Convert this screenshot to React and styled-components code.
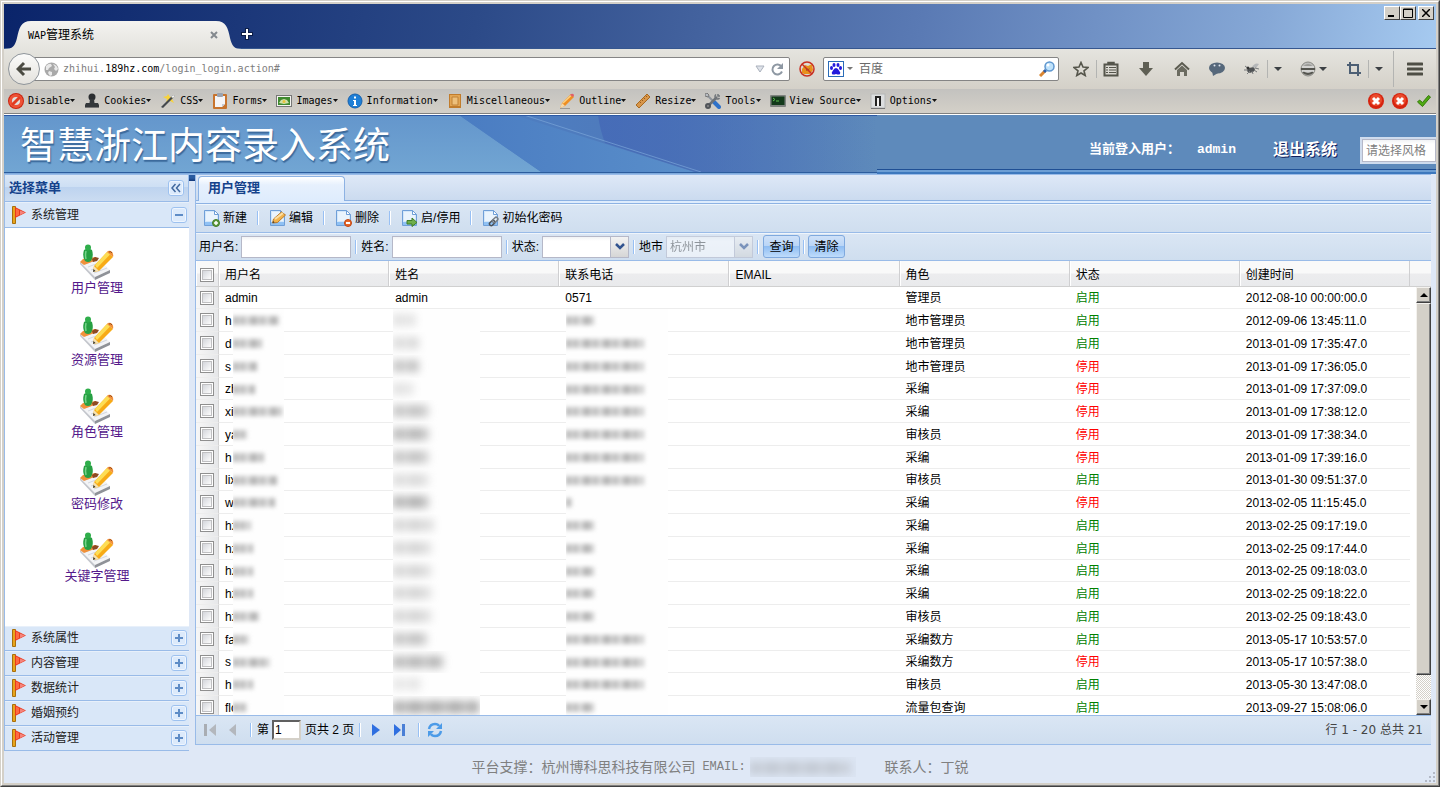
import React from 'react';
import styled, { createGlobalStyle, css } from 'styled-components';

const LINE = '#99bbe8';
const SANS = "'Liberation Sans', 'Noto Sans CJK SC', sans-serif";
const MONO = "'DejaVu Sans Mono', 'Noto Sans CJK SC', monospace";

const GlobalStyle = createGlobalStyle`
  *, *::before, *::after { box-sizing: border-box; }
  body { margin: 0; font: 12px/16px ${SANS}; color: #000; background: #d4d0c8; }
  button, input, select { font: inherit; color: inherit; }
  button { padding: 0; border: 0; background: none; cursor: pointer; }
  svg { display: block; flex: none; }
`;

/* ---------- window frame ---------- */

const Frame = styled.div`
  height: 100vh;
  min-height: 480px;
  border: 1px solid;
  border-color: #d4d0c8 #404040 #404040 #d4d0c8;
`;
const FrameInner = styled.div`
  height: 100%;
  display: flex;
  flex-direction: column;
  padding: 2px;
  background: #d4d0c8;
  border: 1px solid;
  border-color: #fff #808080 #808080 #fff;
`;
const TitleBar = styled.div`
  flex: none;
  display: flex;
  align-items: flex-end;
  height: 45px;
  border-bottom: 1px solid #36578f;
  background: linear-gradient(100deg, #0a246a 0%, #2c4a88 33%, #5a7ab4 64%, #86a8d6 88%, #a6caf0 100%);
`;
const BrowserTab = styled.div`
  position: relative;
  display: flex;
  align-items: center;
  justify-content: space-between;
  width: 238px;
  height: 28px;
  margin-bottom: -1px;
  padding: 0 24px;
`;
const TabShape = styled.svg`
  position: absolute;
  inset: 0;
`;
const TabText = styled.span`
  position: relative;
  font-size: 12px;
`;
const TabLatin = styled.span`
  font-family: ${MONO};
  font-size: 10px;
`;
const IconButton = styled.button`
  position: relative;
  display: flex;
  align-items: center;
  justify-content: center;
  gap: 3px;
  flex: none;
  width: ${(p) => p.$w || 16}px;
  height: ${(p) => p.$h || 24}px;
`;
const WindowButtons = styled.div`
  display: flex;
  align-self: flex-start;
  margin: 2px 2px 0 auto;
`;
const WindowButton = styled.button`
  display: flex;
  align-items: center;
  justify-content: center;
  width: 16px;
  height: 14px;
  background: #d4d0c8;
  border: 1px solid;
  border-color: #fff #404040 #404040 #fff;
  &:last-child { margin-left: 2px; }
`;

/* ---------- browser toolbars ---------- */

const NavBar = styled.div`
  flex: none;
  display: flex;
  align-items: center;
  height: 40px;
  padding-left: 4px;
  background: linear-gradient(#e5e4df, #d4d0c8);
`;
const BackButton = styled.button`
  position: relative;
  z-index: 1;
  display: flex;
  align-items: center;
  justify-content: center;
  width: 32px;
  height: 32px;
  margin-right: -8px;
  border: 1px solid #8f959b;
  border-radius: 50%;
  background: linear-gradient(#fbfbfa, #e4e2dd);
`;
const Field = styled.div`
  display: flex;
  align-items: center;
  height: 24px;
  background: #fff;
  border: 1px solid #858585;
  border-radius: 2px;
`;
const UrlField = styled(Field)`
  flex: 1;
  min-width: 0;
  padding: 0 4px 0 11px;
`;
const Url = styled.a`
  flex: 1;
  margin-left: 4px;
  color: #7d7d7d;
  font: 10px/16px ${MONO};
  text-decoration: none;
  b { color: #000; font-weight: 400; }
`;
const BlockButton = styled(IconButton)`
  margin: 0 8px 0 9px;
`;
const SearchField = styled(Field)`
  width: 236px;
  margin-right: 6px;
  padding: 0 2px 0 4px;
`;
const SearchInput = styled.input`
  flex: 1;
  min-width: 0;
  margin-left: 3px;
  padding: 0;
  border: 0;
  outline: 0;
  background: none;
  &::placeholder { color: #6a6a6a; opacity: 1; }
`;
const NavRule = styled.i`
  flex: none;
  width: 1px;
  height: ${(p) => (p.$tall ? 36 : 18)}px;
  margin-left: ${(p) => (p.$tall ? 4 : 0)}px;
  background: #b3b4b2;
`;
const DevBar = styled.div`
  flex: none;
  display: flex;
  align-items: center;
  gap: 8px;
  height: 25px;
  padding: 0 4px;
  border-bottom: 1px solid #808080;
  background: linear-gradient(#c3c2bf, #d4d0c8);
`;
const DevItem = styled.button`
  display: flex;
  align-items: center;
  flex: none;
  font: 10px/16px ${MONO};
  svg:first-child { margin-right: 4px; }
`;
const DevStatus = styled.div`
  display: flex;
  gap: 8px;
  margin-left: auto;
`;

/* ---------- page header ---------- */

const Page = styled.div`
  position: relative;
  flex: 1;
  min-height: 0;
  display: flex;
  flex-direction: column;
  border-top: 1px solid #fff;
  background: #dfe8f6;
`;
const Header = styled.header`
  position: relative;
  flex: none;
  display: flex;
  align-items: center;
  height: 59px;
  overflow: hidden;
  background: linear-gradient(#5e8abb 0 54px, #1f4f94 54px 55px, #6c9ed4 55px 57px, #3d78bd 57px);
`;
const Banner = styled.svg`
  position: absolute;
  left: 0;
  top: 0;
`;
const SiteTitle = styled.h1`
  position: relative;
  margin: 0 auto 0 16px;
  padding-bottom: 4px;
  color: #fff;
  font: 400 37px/52px 'Noto Sans CJK SC', sans-serif;
  text-shadow: 1px 2px 1px #3c6a9c;
  white-space: nowrap;
`;
const UserInfo = styled.div`
  position: relative;
  padding-top: 10px;
  color: #fff;
  font-size: 13px;
  font-weight: 700;
  white-space: nowrap;
`;
const UserName = styled.span`
  margin-left: 17px;
  font-family: 'Liberation Mono', monospace;
`;
const Logout = styled.a`
  position: relative;
  margin: 10px 23px 0 37px;
  color: #fff;
  font-size: 16px;
  font-weight: 700;
  text-decoration: none;
  text-shadow: 1px 1px 0 #10205c;
  white-space: nowrap;
`;
const StyleBox = styled.div`
  position: relative;
  flex: none;
  width: 76px;
  height: 27px;
  margin-top: 12px;
  padding: 2px 0 2px 2px;
  background: #cfdcee;
`;
const inputLook = css`
  border: 1px solid #b5b8c8;
  border-radius: 0;
  outline: 0;
  background: linear-gradient(#f1f3f5, #fff 4px);
`;
const StyleInput = styled.input`
  width: 74px;
  height: 23px;
  padding: 0 3px;
  ${inputLook}
  &::placeholder { color: gray; opacity: 1; }
`;

/* ---------- sidebar ---------- */

const Body = styled.div`
  flex: 1;
  min-height: 0;
  display: flex;
`;
const Sidebar = styled.nav`
  flex: none;
  display: flex;
  flex-direction: column;
  width: 185px;
  border-left: 1px solid ${LINE};
  border-top: 1px solid ${LINE};
`;
const SideHead = styled.div`
  flex: none;
  display: flex;
  align-items: center;
  justify-content: space-between;
  height: 27px;
  padding: 0 4px;
  border-right: 1px solid ${LINE};
  border-bottom: 1px solid ${LINE};
  background: linear-gradient(#dbe7f6, #cddff4 12px, #bdd3ef 12px, #cbdcf1);
  color: #15428b;
  font-size: 13px;
  font-weight: 700;
`;
const SideItem = styled.button`
  flex: none;
  display: flex;
  align-items: center;
  gap: 3px;
  height: ${(p) => (p.$open ? 26 : 25)}px;
  padding: 0 2px 0 6px;
  border-bottom: 1px solid ${LINE};
  background: #d9e7f8;
  box-shadow: inset 0 1px #e8f0fa;
  color: #222;
  text-align: left;
`;
const SideLabel = styled.span`
  flex: 1;
`;
const SideLinks = styled.div`
  flex: 1;
  min-height: 0;
  overflow: hidden;
  display: flex;
  flex-direction: column;
  align-items: center;
  gap: 20px;
  padding-top: 16px;
  background: #fff;
`;
const SideLink = styled.a`
  display: flex;
  flex-direction: column;
  align-items: center;
  color: #551a8b;
  font-size: 13px;
  text-decoration: none;
`;
const Splitter = styled.div`
  flex: none;
  width: 6px;
  border-top: 1px solid ${LINE};
  background: linear-gradient(#2a5ba0 0 3px, #14387a 6px, #dfe8f6 6px);
`;

/* ---------- main panel ---------- */

const Main = styled.main`
  flex: 1;
  min-width: 0;
  display: flex;
  flex-direction: column;
  margin: 0 5px 6px 0;
  border-left: 1px solid ${LINE};
  border-top: 1px solid ${LINE};
`;
const TabStrip = styled.div`
  flex: none;
  height: 26px;
  padding: 1px 2px 0;
  border-bottom: 1px solid #8db2e3;
  background: linear-gradient(#dee8f7, #cbdbef);
`;
const PanelTab = styled.button`
  width: 147px;
  height: 25px;
  padding: 0 9px 2px;
  border: 1px solid #8db2e3;
  border-bottom: 0;
  border-radius: 4px 4px 0 0;
  background: linear-gradient(#fff, #e6f0fd 8px, #deecfd);
  color: #15428b;
  font-size: 13px;
  font-weight: 700;
  text-align: left;
`;
const TabSpacer = styled.div`
  flex: none;
  height: 3px;
  border-bottom: 1px solid #8db2e3;
  background: #deecfd;
`;
const Bar = styled.div`
  flex: none;
  display: flex;
  align-items: center;
  height: ${(p) => p.$h}px;
  padding: 0 8px 0 ${(p) => p.$left}px;
  border-bottom: 1px solid ${LINE};
  background: linear-gradient(#dae6f4, #cfdeef);
  box-shadow: inset 0 1px #eff5fb;
  white-space: nowrap;
`;
const Rule = styled.i`
  flex: none;
  width: 2px;
  height: 14px;
  margin: 0 ${(p) => p.$gap}px;
  background: linear-gradient(90deg, #98c0f4 1px, #fff 1px);
`;
const ToolButton = styled.button`
  display: flex;
  align-items: center;
  gap: 3px;
  white-space: nowrap;
`;
const Label = styled.label`
  margin-right: 3px;
`;
const TextInput = styled.input`
  width: 110px;
  height: 22px;
  padding: 0 3px;
  ${inputLook}
`;
const Combo = styled.span`
  position: relative;
  display: flex;
  opacity: ${(p) => (p.$off ? 0.55 : 1)};
`;
const Select = styled.select`
  width: 87px;
  height: 22px;
  padding: 0 20px 0 3px;
  appearance: none;
  ${inputLook}
  &:disabled { color: #555; opacity: 1; }
`;
const Trigger = styled.span`
  position: absolute;
  right: 0;
  top: 0;
  display: flex;
  align-items: center;
  justify-content: center;
  width: 19px;
  height: 22px;
  border: 1px solid #b5b8c8;
  background: linear-gradient(#f3f3f3, #d6d6d6);
  pointer-events: none;
`;
const BlueButton = styled.button`
  width: 37px;
  height: 23px;
  border: 1px solid #7fa9de;
  border-radius: 3px;
  background: linear-gradient(#cfe1f8, #b9d5f7 10px, #8dbcf2 10px, #bfdcfb);
`;

/* ---------- grid ---------- */

const GridArea = styled.div`
  flex: 1;
  min-height: 0;
  display: flex;
  overflow: hidden;
  background: #fff;
`;
const TableWrap = styled.div`
  flex: 1;
  min-width: 0;
  overflow: hidden;
`;
const headFill = css`
  height: 26px;
  border-bottom: 1px solid #d0d0d0;
  background: linear-gradient(#f9f9f9 12px, #ececee 13px, #e9eaec);
`;
const Table = styled.table`
  width: 100%;
  table-layout: fixed;
  border-collapse: separate;
  border-spacing: 0;
`;
const CheckCol = styled.col`
  width: 23px;
`;
const Th = styled.th`
  ${headFill}
  padding: 2px 6px 0;
  border-right: 1px solid #cfcfd1;
  box-shadow: inset 1px 0 #fff;
  font-weight: 400;
  text-align: left;
`;
/* The row rhythm alternates 23px with an occasional 22px row. */
const Row = styled.tr`
  height: 23px;
  &:nth-child(4n + 1) { height: 22px; }
`;
const Td = styled.td`
  position: relative;
  padding: 1px 6px 0;
  border-bottom: 1px solid #ededed;
  color: ${(p) => p.$color || '#000'};
  line-height: 16px;
  white-space: nowrap;
`;
const CheckTd = styled(Td)`
  padding: 0 0 0 4px;
  border-right: 1px solid #d3d3d3;
  background: linear-gradient(90deg, #f7f7f7, #e6e7e9);
`;
const CheckTh = styled(Th)`
  padding: 3px 0 0 4px;
`;
const Check = styled.input`
  display: block;
  appearance: none;
  width: 14px;
  height: 14px;
  margin: 0;
  border: 1px solid #8f8f8f;
  background: linear-gradient(135deg, #c9ccd3, #fbfbfb 80%);
  box-shadow: inset 0 0 0 1px #fff, inset 0 0 0 2px #c0c0c2;
  &:checked { background: #6b8fc4; }
`;
/* Patch that hides private values behind a blurred smear. */
const Mask = styled.span`
  position: absolute;
  left: ${(p) => p.$left}px;
  top: 0;
  bottom: -1px;
  width: ${(p) => p.$w}px;
  overflow: hidden;
  background: #fefefe;
`;
const Smear = styled.span`
  position: absolute;
  left: 0;
  top: ${(p) => (p.$tall ? 5 : 7)}px;
  width: ${(p) => p.$w}px;
  height: ${(p) => (p.$tall ? 12 : 9)}px;
  background: repeating-linear-gradient(90deg, #6f6f6f 0 4px, #a9a9a9 4px 7px, #858585 7px 12px, #b5b5b5 12px 17px, #747474 17px 20px);
  opacity: ${(p) => p.$o};
  filter: blur(${(p) => (p.$tall ? 4 : 2)}px);
`;
const ScrollCol = styled.div`
  flex: none;
  display: flex;
  flex-direction: column;
  width: 21px;
`;
const HeadFill = styled.div`
  flex: none;
  ${headFill}
`;
const ScrollBar = styled.div`
  flex: 1;
  min-height: 0;
  display: flex;
  flex-direction: column;
  width: 15px;
  margin-left: auto;
  background: repeating-conic-gradient(#d4d0c8 0 25%, #fff 0 50%) 0 0 / 2px 2px;
`;
const raised = css`
  border: 1px solid;
  border-color: #f4f2ee #404040 #404040 #f4f2ee;
  background: #d4d0c8;
  box-shadow: inset -1px -1px #808080;
`;
const ScrollButton = styled.button`
  flex: none;
  display: flex;
  align-items: center;
  justify-content: center;
  height: 16px;
  ${raised}
`;
const ScrollTrack = styled.div`
  flex: 1;
  min-height: 0;
`;
const ScrollThumb = styled.div`
  height: 94%;
  ${raised}
`;
const Pager = styled.div`
  flex: none;
  display: flex;
  align-items: center;
  height: 30px;
  padding: 0 8px;
  border: solid ${LINE};
  border-width: 1px 0;
  background: linear-gradient(#dae6f4, #cfdeef);
  white-space: nowrap;
`;
const PageInput = styled.input`
  width: 29px;
  height: 20px;
  margin-right: 4px;
  padding: 0 1px;
  border: 2px solid;
  border-color: #606060 #d4d0c8 #d4d0c8 #606060;
  background: #fff;
`;
const PagerInfo = styled.span`
  margin-left: auto;
  color: #444;
  font-family: 'DejaVu Sans', 'Noto Sans CJK SC', sans-serif;
`;
const Footer = styled.footer`
  flex: none;
  display: flex;
  align-items: center;
  justify-content: center;
  height: 32px;
  color: #808080;
  font-size: 14px;
  white-space: nowrap;
`;
const FooterLatin = styled.span`
  margin: 0 4px 0 7px;
  font: 12px/16px 'Liberation Mono', monospace;
`;
const FooterMask = styled.span`
  position: relative;
  width: 106px;
  height: 20px;
  margin-right: 29px;
  overflow: hidden;
  background: #dce5f3;
`;
const Grip = styled.svg`
  position: absolute;
  right: 0;
  bottom: 0;
`;

/* ---------- drawings ---------- */

const Ico = ({ s = 16, h, children }) => (
  <svg width={s} height={h || s} viewBox={`0 0 ${s} ${h || s}`} aria-hidden="true">{children}</svg>
);
const Caret = ({ fill = '#3c4044' }) => (
  <svg width="8" height="5" viewBox="0 0 8 5" aria-hidden="true"><path d="M0 0h8L4 4z" fill={fill} /></svg>
);
const TinyCaret = () => (
  <svg width="6" height="6" viewBox="0 0 6 6" aria-hidden="true"><path d="M0 1h5L2.500 4z" fill="#111" /></svg>
);

const devIcons = {
  Disable: <><circle cx="8" cy="8" r="8" fill="#c9240f" /><circle cx="8" cy="8" r="5" fill="#e2e0de" /><circle cx="8" cy="8" r="5.500" fill="none" stroke="#ee5236" strokeWidth="3" /><path d="M4 12L12 4" stroke="#e23b20" strokeWidth="3" /></>,
  Cookies: <><circle cx="8" cy="4" r="3.500" fill="#2b2e31" /><path d="M6 6h4l.5 4H14l1 2v2H1v-2l1-2h3.500z" fill="#33373a" /><path d="M1 14h14v1H1z" fill="#777" /></>,
  CSS: <><path d="M8 1l2 3 4-1-2 3 2 4-4-2-4 2 1-4-4-2 4-1z" fill="#f8d33a" /><path d="M1 14L13 2l2 1L3 15z" fill="#44484d" /><path d="M11 4l2-2 2 1-2 2z" fill="#eee" /></>,
  Forms: <><rect x="1" y="1" width="14" height="15" rx="1" fill="#c8742e" /><path d="M3 3h10v8l-3 3H3z" fill="#f5f5f7" /><path d="M10 14v-3h3z" fill="#c5cbd5" /><rect x="5" y="0" width="6" height="4" rx="1" fill="#9aa3b0" /></>,
  Images: <><rect x=".5" y="2.500" width="15" height="11" fill="#f4f4f0" stroke="#777" /><rect x="2" y="4" width="12" height="8" fill="#3f8a2f" /><path d="M3 10l2-3 3-1 3 1 2 3-5 1z" fill="#cfe0a8" /><circle cx="8" cy="8.500" r="1.500" fill="#eac23b" /></>,
  Information: <><circle cx="8" cy="8" r="7" fill="#1f7fd6" stroke="#1560ad" /><path d="M7 3.500h2v2H7zM6 7h3v5h1v1H6v-1h1V8H6z" fill="#fff" /></>,
  Miscellaneous: <><path d="M2 1h12v14H2z" fill="#c17c2c" /><path d="M3 2h10v11H3z" fill="#e3a654" /><path d="M5 4h6v8H5z" fill="#edc07c" stroke="#c08238" /></>,
  Outline: <><path d="M1 15l2-5L12 1l3 3-9 9z" fill="#ef8f23" /><path d="M4 10L12.500 2" stroke="#fbd082" strokeWidth="1.500" /><path d="M11 2l1-1q2-1 3 1 0 1-1 2z" fill="#df5f69" /><path d="M1 15l2-5 3 3z" fill="#f3d9ae" /><path d="M1 15.500h10" stroke="#9a9895" /></>,
  Resize: <><path d="M1 12L12 1l3 3L4 15z" fill="#d8964a" stroke="#a8691f" /><path d="M5 9l1 1M7 7l1 1M9 5l1 1M11 3l1 1" stroke="#9b5e1b" /></>,
  Tools: <><path d="M3 3l8 8" stroke="#8d939b" strokeWidth="2" /><path d="M9 9l5 5" stroke="#2f72c9" strokeWidth="4" strokeLinecap="round" /><path d="M3 13l9-9" stroke="#6d7277" strokeWidth="2.500" /><path d="M11 1.500a2.500 2.500 0 1 0 3.500 3.500M13 1v2h2" fill="none" stroke="#70757a" strokeWidth="1.500" /><circle cx="3" cy="13" r="2" fill="#888" stroke="#505458" strokeWidth="2" /><path d="M0 1l2-1 2 2-1 2-3-1z" fill="#b7bcc2" stroke="#777" /></>,
  'View Source': <><rect x="0" y="2" width="16" height="12" rx="1" fill="#7f8380" /><rect x="1.500" y="3.500" width="13" height="8.500" fill="#12391a" /><path d="M3 5l2 1.500L3 8M6 8h3" stroke="#5fc04f" fill="none" /></>,
  Options: <><rect x="1" y="1" width="14" height="14" fill="#dcdedf" stroke="#b5b7b7" /><path d="M1 15.500h14" stroke="#777" /><rect x="5" y="3" width="6" height="10" fill="#222" /><rect x="7" y="5" width="2" height="8" fill="#f5f5f5" /></>,
};

const RedCross = () => (
  <Ico><circle cx="8" cy="8" r="8" fill="#d6240f" /><circle cx="8" cy="7" r="6" fill="#ea4a2c" /><path d="M5 5l6 6M11 5l-6 6" stroke="#fff" strokeWidth="3" /></Ico>
);

const PageIcon = ({ children }) => (
  <Ico s={17}>
    <path d="M1.500 .5h10l4 4v11h-14z" fill="#d3e7fa" stroke="#6f9fd8" />
    <path d="M3 2h8v3h3v6H3z" fill="#eaf4fd" /><path d="M2 12h13v3H2z" fill="#8fc1f4" />
    <path d="M11.500 .5v4h4z" fill="#fff" stroke="#6f9fd8" />
    {children}
  </Ico>
);
const toolIcons = {
  add: <PageIcon><circle cx="13" cy="13" r="3.500" fill="#5f9e3e" stroke="#437a28" /><path d="M11 13h4M13 11v4" stroke="#fff" strokeWidth="1.500" /></PageIcon>,
  edit: <PageIcon><path d="M3.500 13l1-4 8-7 4 3-8 7.500z" fill="#f2b34c" stroke="#b9792a" /><path d="M6 9l8-6" stroke="#fbe0a6" strokeWidth="2" /><path d="M3.500 13l1-2 1 1.500z" fill="#333" /></PageIcon>,
  remove: <PageIcon><circle cx="13" cy="13" r="3.500" fill="#e8682c" stroke="#bf4613" /><path d="M11 13h4" stroke="#fff" strokeWidth="2" /></PageIcon>,
  toggle: <PageIcon><path d="M6 10.500h5V8l5 4.500-5 4V14H6z" fill="#6faf4b" stroke="#3f7d27" /></PageIcon>,
  reset: <PageIcon><rect x="7.500" y="11.500" width="6" height="3.500" rx="1.500" transform="rotate(-45 10 13.500)" fill="none" stroke="#4b5158" strokeWidth="1.500" /><rect x="10.500" y="8.500" width="6" height="3.500" rx="1.500" transform="rotate(-45 13 10.500)" fill="none" stroke="#777e86" strokeWidth="1.500" /></PageIcon>,
};

const Flag = () => (
  <Ico s={17} h={18}>
    <path d="M1.500 .5h3v17h-3z" fill="#e8a51d" stroke="#a86f0c" />
    <path d="M4 1L15 6.500 4 12z" fill="#e93a1d" />
    <path d="M5 2.500L8 4v5l-3 1.500z" fill="#ff6a42" />
    <path d="M9 4.500l5 2-5 2.500z" fill="#f4847c" />
  </Ico>
);
const BoxToggle = ({ kind }) => (
  <Ico s={16}>
    <rect x=".5" y=".5" width="15" height="15" rx="2.500" fill="#eef5fe" stroke="#9dc1ef" />
    <rect x="2" y="2" width="12" height="12" rx="1" fill="#dceafb" />
    {kind === 'fold'
      ? <path d="M7.500 4L4 8l3.500 4M12 4L8.500 8l3.500 4" fill="none" stroke="#41699f" strokeWidth="1.500" />
      : <path d={kind === 'minus' ? 'M4 8h8' : 'M4 8h8M8 4v8'} stroke="#5e8cc6" strokeWidth="2" />}
  </Ico>
);
const NoteIcon = () => (
  <Ico s={36}>
    <path d="M1 18L17 13 31 26 16 33z" fill="#f3f4f6" />
    <path d="M1 18L16 33v3L1 20z" fill="#c3c6cc" /><path d="M16 33L31 26v3L16 36z" fill="#8f9298" />
    <path d="M6 20l13-5M9 23l13-5M12 26l13-5M15 29l13-5" stroke="#d4d8df" />
    <path d="M1 18l3-3 13-2 1 3-13 5z" fill="#f0913a" />
    <path d="M13 15l3-2 4 1-2 3-4 1z" fill="#8e4a22" />
    <path d="M5 6q4-3 8 0 2 6-1 11-3 2-6 0Q3 12 5 6z" fill="#27a043" />
    <circle cx="9" cy="3.500" r="3" fill="#2fae4b" /><path d="M7 7q-1 4 0 8" stroke="#76d48a" strokeWidth="1.500" fill="none" />
    <path d="M14 28l1-6L28 8l6 5-14 14z" fill="#f7ab17" />
    <path d="M16 21L28 8l3 2.500L18 24z" fill="#fddd55" />
    <path d="M28 8q1-2 4-1 3 2 2 6z" fill="#f0903a" /><path d="M30 8q2-1 3 1" stroke="#9a4a1b" fill="none" />
    <path d="M14 28l1-6 5 5z" fill="#f5e2b0" /><path d="M14 28l.5-3 2 2z" fill="#333" />
  </Ico>
);

/* ---------- data ---------- */

const sideLinks = ['用户管理', '资源管理', '角色管理', '密码修改', '关键字管理'];
const sideGroups = ['系统属性', '内容管理', '数据统计', '婚姻预约', '活动管理'];
const headings = ['用户名', '姓名', '联系电话', 'EMAIL', '角色', '状态', '创建时间'];

// visible start of the name, smear widths for name / full name / phone, full-name darkness, role, enabled, created
const users = [
  ['admin', 0, 0, 0, 0, '管理员', 1, '2012-08-10 00:00:00.0'],
  ['h', 46, 22, 28, 0.25, '地市管理员', 1, '2012-09-06 13:45:11.0'],
  ['d', 29, 26, 78, 0.3, '地市管理员', 1, '2013-01-09 17:35:47.0'],
  ['s', 24, 26, 78, 0.5, '地市管理员', 0, '2013-01-09 17:36:05.0'],
  ['zh', 22, 20, 78, 0.25, '采编', 0, '2013-01-09 17:37:09.0'],
  ['xi', 49, 36, 78, 0.5, '采编', 0, '2013-01-09 17:38:12.0'],
  ['ya', 14, 36, 78, 0.6, '审核员', 0, '2013-01-09 17:38:34.0'],
  ['h', 31, 36, 78, 0.5, '采编', 0, '2013-01-09 17:39:16.0'],
  ['lix', 44, 36, 78, 0.3, '审核员', 1, '2013-01-30 09:51:37.0'],
  ['w', 42, 36, 6, 0.65, '采编', 0, '2013-02-05 11:15:45.0'],
  ['hz', 18, 40, 28, 0.35, '采编', 1, '2013-02-25 09:17:19.0'],
  ['hz', 20, 38, 28, 0.35, '采编', 1, '2013-02-25 09:17:44.0'],
  ['hz', 20, 38, 28, 0.35, '采编', 1, '2013-02-25 09:18:03.0'],
  ['hz', 20, 38, 28, 0.35, '采编', 1, '2013-02-25 09:18:22.0'],
  ['hz', 26, 38, 28, 0.35, '审核员', 1, '2013-02-25 09:18:43.0'],
  ['fa', 16, 34, 78, 0.5, '采编数方', 1, '2013-05-17 10:53:57.0'],
  ['s', 37, 50, 78, 0.6, '采编数方', 0, '2013-05-17 10:57:38.0'],
  ['h', 20, 28, 78, 0.2, '审核员', 1, '2013-05-30 13:47:08.0'],
  ['flow', 14, 86, 28, 0.7, '流量包查询', 1, '2013-09-27 15:08:06.0'],
];

const tools = [['add', '新建'], ['edit', '编辑'], ['remove', '删除'], ['toggle', '启/停用'], ['reset', '初始化密码']];

/* ---------- parts ---------- */

function BrowserChrome() {
  return (
    <>
      <TitleBar>
        <BrowserTab>
          <TabShape width="238" height="28" viewBox="0 0 238 28" aria-hidden="true">
            <defs><linearGradient id="tab" x1="0" y1="0" x2="0" y2="1"><stop offset="0" stopColor="#f4f3f0" /><stop offset="1" stopColor="#e5e4df" /></linearGradient></defs>
            <path d="M0 28C9 28 11 25 13 17C15 7 17 0 27 0H212C222 0 224 7 226 17C228 25 230 28 238 28z" fill="url(#tab)" />
          </TabShape>
          <TabText><TabLatin>WAP</TabLatin>管理系统</TabText>
          <IconButton $w={8} $h={16} aria-label="关闭标签页"><Ico s={8}><path d="M1 1l6 6M7 1L1 7" stroke="#84898e" strokeWidth="2" /></Ico></IconButton>
        </BrowserTab>
        <IconButton $w={10} $h={28} aria-label="新标签页"><Ico s={12}><path d="M6 0v12M0 6h12" stroke="#0b1c45" strokeWidth="4" /><path d="M6 1v10M1 6h10" stroke="#fff" strokeWidth="2" /></Ico></IconButton>
        <WindowButtons>
          <WindowButton aria-label="最小化"><Ico s={10}><path d="M1 8h6" stroke="#000" strokeWidth="2" /></Ico></WindowButton>
          <WindowButton aria-label="最大化"><Ico s={10}><path d="M.5 1h9v8.500h-9z M0 1.500h10" fill="none" stroke="#000" /></Ico></WindowButton>
          <WindowButton aria-label="关闭"><Ico s={8}><path d="M0 0l8 8M8 0L0 8" stroke="#000" strokeWidth="1.500" /></Ico></WindowButton>
        </WindowButtons>
      </TitleBar>
      <NavBar>
        <BackButton aria-label="后退"><Ico><path d="M8 2L2 8l6 6M2.500 8H15" fill="none" stroke="#4b4b42" strokeWidth="3" /></Ico></BackButton>
        <UrlField>
          <Ico s={15}><circle cx="7.500" cy="7.500" r="7" fill="#a9a9a9" /><path d="M2 4q3-3 5-2l1 2-3 2-1 2H2zM9 2q4 1 5 5l-2 2-2-2 1-2zM5 9l3 1v3l-2 1-2-3z" fill="#e9e9e9" /></Ico>
          <Url href="#">zhihui.<b>189hz.com</b>/login_login.action#</Url>
          <IconButton $w={18} $h={20} aria-label="历史"><Ico s={10} h={8}><path d="M1 1h8L5 7z" fill="#dfe3ea" stroke="#aab1bc" /></Ico></IconButton>
          <IconButton $w={16} $h={20} aria-label="刷新"><Ico s={13}><path d="M10.500 3.500A5 5 0 1 0 11 8.500" fill="none" stroke="#8e98a3" strokeWidth="2" /><path d="M12 0v6H6z" fill="#8e98a3" /></Ico></IconButton>
        </UrlField>
        <BlockButton aria-label="拦截"><Ico><path d="M3 8l3-4 3 1 4-2 1 6-3 4H5l-2-1z" fill="#e8901c" /><path d="M7 7l2 1 2-1-1 2-3 1z" fill="#a3641c" /><circle cx="8" cy="8" r="7" fill="none" stroke="#c83022" strokeWidth="1.500" /><path d="M3 3l10 10" stroke="#c83022" strokeWidth="1.500" /></Ico></BlockButton>
        <SearchField>
          <Ico><rect x=".5" y=".5" width="15" height="15" fill="#fff" stroke="#2a6cb8" /><g fill="#2319dc"><ellipse cx="3.500" cy="7" rx="1.500" ry="2" /><ellipse cx="6" cy="4" rx="1.500" ry="2" /><ellipse cx="10" cy="4" rx="1.500" ry="2" /><ellipse cx="12.500" cy="7" rx="1.500" ry="2" /><path d="M8 7q2 0 3 2.500 2 2 1 3.500-1 1-4 0-3 1-4 0-1-1.500 1-3.500Q6 7 8 7z" /></g></Ico>
          <IconButton $w={12} $h={20} aria-label="搜索引擎"><svg width="6" height="4" viewBox="0 0 6 4"><path d="M0 0h6L3 3z" fill="#777" /></svg></IconButton>
          <SearchInput aria-label="搜索" placeholder="百度" />
          <IconButton $w={18} $h={20} aria-label="搜索"><Ico><path d="M1 15l5-5" stroke="#d98531" strokeWidth="3" /><path d="M5 11l2-2" stroke="#2a5ca8" strokeWidth="3" /><circle cx="10.500" cy="5.500" r="4.500" fill="#bfe2fb" stroke="#5f97cf" strokeWidth="1.500" /><circle cx="9" cy="4" r="1.500" fill="#fff" /></Ico></IconButton>
        </SearchField>
        <IconButton $w={31} aria-label="书签"><Ico><path d="M8 1.500l2 4.500 5 .5-4 3.300 1.200 4.700L8 12l-4.200 2.500L5 9.800 1 6.500 6 6z" fill="none" stroke="#55554b" strokeWidth="1.600" /></Ico></IconButton>
        <NavRule />
        <IconButton $w={28} aria-label="书签列表"><Ico><path d="M1.500 3.500h13v11h-13z" fill="none" stroke="#55554b" strokeWidth="2" /><path d="M5 3V1.500h6V3z" fill="#55554b" stroke="#55554b" strokeWidth="1.500" /><path d="M3 6.500h2M6 6.500h7M3 9h2M6 9h7M3 11.500h2M6 11.500h7" stroke="#55554b" /></Ico></IconButton>
        <IconButton $w={42} aria-label="下载"><Ico><path d="M5 1h6v6h4l-7 8-7-8h4z" fill="#5f5f54" /></Ico></IconButton>
        <IconButton $w={30} aria-label="主页"><Ico><path d="M1 8.500L8 2l7 6.500" fill="none" stroke="#5b5b50" strokeWidth="2" /><path d="M3 9l5-4.500L13 9v6h-3v-4H6v4H3z" fill="#6b6b60" /></Ico></IconButton>
        <IconButton $w={40} aria-label="聊天"><Ico><ellipse cx="8" cy="7" rx="8" ry="5.500" fill="#56687b" /><path d="M3 10l1 5 5-3z" fill="#56687b" /><circle cx="5.500" cy="4.500" r="1" fill="#dfe6ee" /><circle cx="10.500" cy="4.500" r="1" fill="#dfe6ee" /></Ico></IconButton>
        <IconButton $w={30} aria-label="调试"><Ico><path d="M8 6q3-5 7-3l-3 4z" fill="#b5b7b9" /><ellipse cx="7" cy="9" rx="4" ry="2.500" transform="rotate(-20 7 9)" fill="#4f5254" /><path d="M1 5l4 3M0 9h4M3 13l3-3M9 13l-1-3M13 11l-3-2M15 8l-4-1" stroke="#77797a" /><circle cx="4" cy="7" r="1.500" fill="#333" /></Ico></IconButton>
        <NavRule />
        <IconButton $w={19} aria-label="更多"><Caret /></IconButton>
        <IconButton $w={53} aria-label="视图"><Ico><circle cx="8" cy="8" r="7" fill="#bdbdbb" stroke="#8b8b85" /><path d="M3.500 5Q8 1 12.500 5z" fill="#9b9b97" /><path d="M1 8h14M3 11q5 4 10 0" fill="none" stroke="#55554f" strokeWidth="2" /><path d="M2 6h12M2 10h12" stroke="#e9e9e7" /></Ico><Caret /></IconButton>
        <IconButton $w={28} aria-label="截图"><Ico><path d="M4 1v11h11M1 4h11v11" fill="none" stroke="#4d5f74" strokeWidth="2" /></Ico></IconButton>
        <NavRule />
        <IconButton $w={20} aria-label="更多"><Caret /></IconButton>
        <NavRule $tall />
        <IconButton $w={42} aria-label="菜单"><Ico><path d="M1 3h14M1 8h14M1 13h14" stroke="#4e4e45" strokeWidth="3" strokeLinecap="round" /></Ico></IconButton>
      </NavBar>
      <DevBar>
        {Object.keys(devIcons).map((name) => (
          <DevItem key={name}><Ico>{devIcons[name]}</Ico>{name}<TinyCaret /></DevItem>
        ))}
        <DevStatus>
          <RedCross /><RedCross />
          <Ico><path d="M1.500 9l2-2 3 2.500 6-7 2 1.500-8 9.500z" fill="#4faa12" stroke="#33790a" /></Ico>
        </DevStatus>
      </DevBar>
    </>
  );
}

function PageHeader() {
  return (
    <Header>
      <Banner width="873" height="59" viewBox="0 0 873 59" aria-hidden="true">
        <defs>
          <linearGradient id="sky" x1="0" y1="0" x2="0" y2="1"><stop offset="0" stopColor="#6496cc" /><stop offset="1" stopColor="#72a6d3" /></linearGradient>
          <linearGradient id="deep" x1="0" y1="0" x2="1" y2="0"><stop offset="0" stopColor="#4d7fc4" /><stop offset=".5" stopColor="#4f79b9" /><stop offset="1" stopColor="#5e8abb" /></linearGradient>
          <linearGradient id="wedge" x1="0" y1="0" x2="1" y2="0"><stop offset="0" stopColor="#4a7cc2" /><stop offset="1" stopColor="#5a8fca" /></linearGradient>
          <linearGradient id="shade" x1="0" y1="0" x2="1" y2="0"><stop offset="0" stopColor="#4468b6" stopOpacity=".8" /><stop offset="1" stopColor="#4468b6" stopOpacity="0" /></linearGradient>
        </defs>
        <path d="M0 0h873v59H0z" fill="url(#sky)" />
        <path d="M455 0H873V59H540z" fill="url(#deep)" />
        <path d="M455 0L540 59H697L510 0z" fill="url(#wedge)" />
        <path d="M594 0Q596 15 601 28L697 59H873V0z" fill="url(#shade)" />
        <path d="M520 0L697 57" stroke="#7aa5d8" opacity=".7" />
        <path d="M0 .5h873" stroke="#2d5aa5" />
        <path d="M0 57.500h873" stroke="#2c5c9d" /><path d="M0 58.500h873" stroke="#7eaadc" />
      </Banner>
      <SiteTitle>智慧浙江内容录入系统</SiteTitle>
      <UserInfo>当前登入用户：<UserName>admin</UserName></UserInfo>
      <Logout href="#">退出系统</Logout>
      <StyleBox><StyleInput aria-label="风格" placeholder="请选择风格" /></StyleBox>
    </Header>
  );
}

function SideMenu() {
  return (
    <Sidebar>
      <SideHead>选择菜单<IconButton $h={16} aria-label="收起"><BoxToggle kind="fold" /></IconButton></SideHead>
      <SideItem $open><Flag /><SideLabel>系统管理</SideLabel><BoxToggle kind="minus" /></SideItem>
      <SideLinks>
        {sideLinks.map((t) => <SideLink key={t} href="#"><NoteIcon />{t}</SideLink>)}
      </SideLinks>
      {sideGroups.map((t) => (
        <SideItem key={t}><Flag /><SideLabel>{t}</SideLabel><BoxToggle kind="plus" /></SideItem>
      ))}
    </Sidebar>
  );
}

function ComboBox({ id, value, off }) {
  return (
    <Combo $off={off}>
      <Select id={id} disabled={off} defaultValue={value}><option value={value}>{value}</option></Select>
      <Trigger><Ico s={10} h={7}><path d="M1 1l4 4 4-4" fill="none" stroke="#31538f" strokeWidth="2.500" /></Ico></Trigger>
    </Combo>
  );
}

function UserRow({ user }) {
  const [start, nameW, fullW, phoneW, dark, role, on, created] = user;
  const open = nameW === 0;
  return (
    <Row>
      <CheckTd><Check type="checkbox" aria-label={`选择 ${start}`} /></CheckTd>
      <Td>{start}{!open && <Mask $left={14} $w={51}><Smear $w={nameW} $o={0.5} /></Mask>}</Td>
      <Td>{open ? start : <Mask $left={4} $w={87}><Smear $w={fullW} $o={dark} $tall /></Mask>}</Td>
      <Td>{open ? '0571' : <Mask $left={7} $w={102}><Smear $w={phoneW} $o={0.5} /></Mask>}</Td>
      <Td />
      <Td>{role}</Td>
      <Td $color={on ? '#008000' : '#f00'}>{on ? '启用' : '停用'}</Td>
      <Td>{created}</Td>
    </Row>
  );
}

function UserGrid() {
  return (
    <GridArea>
      <TableWrap>
        <Table>
          <colgroup><CheckCol />{headings.map((h) => <col key={h} />)}</colgroup>
          <thead>
            <tr>
              <CheckTh><Check type="checkbox" aria-label="全选" /></CheckTh>
              {headings.map((h) => <Th key={h}>{h}</Th>)}
            </tr>
          </thead>
          <tbody>{users.map((u) => <UserRow key={u[7]} user={u} />)}</tbody>
        </Table>
      </TableWrap>
      <ScrollCol>
        <HeadFill />
        <ScrollBar>
          <ScrollButton aria-label="向上滚动"><Ico s={8} h={4}><path d="M0 4h8L4 0z" /></Ico></ScrollButton>
          <ScrollTrack><ScrollThumb /></ScrollTrack>
          <ScrollButton aria-label="向下滚动"><Ico s={8} h={4}><path d="M0 0h8L4 4z" /></Ico></ScrollButton>
        </ScrollBar>
      </ScrollCol>
    </GridArea>
  );
}

function PagerBar() {
  return (
    <Pager>
      <IconButton $w={12} aria-label="首页" disabled><Ico s={12} h={14}><path d="M0 1h3v12H0z" fill="#a9adb3" /><path d="M12 1v12L5 7z" fill="#b3b7bd" /></Ico></IconButton>
      <IconButton $w={34} aria-label="上一页" disabled><Ico s={8} h={14}><path d="M7 1v12L0 7z" fill="#b3b7bd" /></Ico></IconButton>
      <Rule $gap={0} />
      <IconButton as="i" $w={5} $h={14} />
      <Label htmlFor="page">第</Label>
      <PageInput id="page" defaultValue="1" />
      页共 2 页
      <Rule $gap={5} />
      <IconButton $w={20} aria-label="下一页"><Ico s={8} h={14}><path d="M0 1v12l8-6z" fill="#2f6fe0" /></Ico></IconButton>
      <IconButton $w={28} aria-label="末页"><Ico s={12} h={14}><path d="M0 1v12l7-6z" fill="#2f6fe0" /><path d="M8 1h3v12H8z" fill="#4a7fd6" /></Ico></IconButton>
      <Rule $gap={4} />
      <IconButton $w={22} aria-label="刷新"><Ico><path d="M2 7Q3 2 8 2q3 0 4 2M14 9q-1 5-6 5-3 0-4-2" fill="none" stroke="#4c9be8" strokeWidth="2.500" /><path d="M15 1v6H9zM1 15V9h6z" fill="#4c9be8" /></Ico></IconButton>
      <PagerInfo>行 1 - 20 总共 21</PagerInfo>
    </Pager>
  );
}

export default function App() {
  return (
    <Frame>
      <GlobalStyle />
      <FrameInner>
        <BrowserChrome />
        <Page>
          <PageHeader />
          <Body>
            <SideMenu />
            <Splitter />
            <Main>
              <TabStrip><PanelTab>用户管理</PanelTab></TabStrip>
              <TabSpacer />
              <Bar $h={29} $left={7}>
                {tools.map(([key, text], i) => (
                  <React.Fragment key={key}>
                    {i > 0 && <Rule $gap={10} />}
                    <ToolButton>{toolIcons[key]}{text}</ToolButton>
                  </React.Fragment>
                ))}
              </Bar>
              <Bar as="form" $h={28} $left={3}>
                <Label htmlFor="account">用户名:</Label>
                <TextInput id="account" />
                <Rule $gap={4} />
                <Label htmlFor="name">姓名:</Label>
                <TextInput id="name" />
                <Rule $gap={4} />
                <Label htmlFor="state">状态:</Label>
                <ComboBox id="state" value="" />
                <Rule $gap={4} />
                <Label htmlFor="city">地市</Label>
                <ComboBox id="city" value="杭州市" off />
                <Rule $gap={4} />
                <BlueButton type="button">查询</BlueButton>
                <Rule $gap={3} />
                <BlueButton type="button">清除</BlueButton>
              </Bar>
              <UserGrid />
              <PagerBar />
            </Main>
          </Body>
          <Footer>
            平台支撑：杭州博科思科技有限公司<FooterLatin>EMAIL:</FooterLatin>
            <FooterMask><Smear $w={100} $o={0.3} $tall /></FooterMask>
            联系人：丁锐
          </Footer>
          <Grip width="12" height="12" viewBox="0 0 12 12" aria-hidden="true">
            <path d="M9 1h2v2H9zM9 5h2v2H9zM9 9h2v2H9zM5 5h2v2H5zM5 9h2v2H5zM1 9h2v2H1z" fill="#b3b9c6" />
          </Grip>
        </Page>
      </FrameInner>
    </Frame>
  );
}
